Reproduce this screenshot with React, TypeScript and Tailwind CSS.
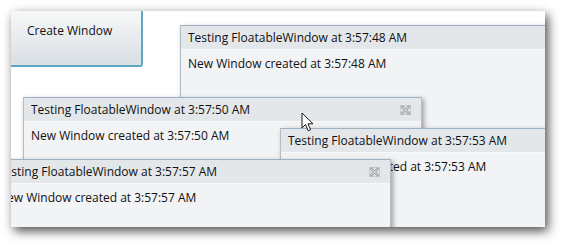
import React from "react";

const font = { fontFamily: '"Open Sans", "Noto Sans", sans-serif' };

function CloseIcon() {
  return (
    <svg width="11" height="10" viewBox="0 0 11 10" className="block">
      <rect x="0.5" y="0.5" width="10" height="9" fill="none" stroke="#c4c8cc" strokeWidth="1" />
      <path d="M2.5 2 L8.5 8 M8.5 2 L2.5 8" stroke="#9a9ea3" strokeWidth="2.6" strokeLinecap="square" />
      <path d="M2.5 2 L8.5 8 M8.5 2 L2.5 8" stroke="#eef0f2" strokeWidth="1" strokeLinecap="square" />
    </svg>
  );
}

function FWindow({
  time,
  className,
  close,
}: {
  time: string;
  className: string;
  close?: boolean;
}) {
  return (
    <div
      className={`absolute flex flex-col border border-[#b4bcc4] border-t-[#9fb2c4] bg-[#f2f3f5] shadow-[2px_2px_5px_rgba(0,0,0,0.35)] ${className}`}
    >
      <div className="flex h-[24px] shrink-0 items-center justify-between border-b border-b-[#f7f8f9] bg-[#e3e7ea] pl-[7px] pr-[10px]">
        <span className="whitespace-nowrap text-[12px] text-[#111]">
          Testing FloatableWindow at {time}
        </span>
        {close && <CloseIcon />}
      </div>
      <div className="whitespace-nowrap pl-[7px] pt-[6px] text-[12px] leading-[16px] text-[#111]">
        New Window created at {time}
      </div>
    </div>
  );
}

export default function App() {
  return (
    <div className="h-[247px] w-[565px] bg-white pl-[11px] pt-[11px]" style={font}>
      <div className="relative h-[216px] w-[534px] overflow-hidden bg-white shadow-[3px_4px_10px_rgba(0,0,0,0.7)]">
        <div className="absolute left-0 top-0 h-[56px] w-[132px] rounded-br-[3px] border-b-2 border-r-2 border-[#5aa8c4] bg-gradient-to-b from-[#f7f8f8] to-[#d9dfe4] pl-[16px] pt-[11px] text-[12px] text-[#111]">
          Create Window
        </div>
        <FWindow time="3:57:48 AM" className="left-[169px] top-[14px] h-[230px] w-[400px]" />
        <FWindow time="3:57:50 AM" className="left-[12px] top-[86px] h-[100px] w-[399px]" close />
        <FWindow time="3:57:53 AM" className="left-[269px] top-[117px] h-[130px] w-[400px]" />
        <FWindow time="3:57:57 AM" className="left-[-21px] top-[148px] h-[80px] w-[401px]" close />
        <svg
          className="absolute left-[290px] top-[101px]"
          width="14"
          height="21"
          viewBox="0 0 14 21"
        >
          <path
            d="M1 1 L1 16 L4.5 12.5 L7.2 18.8 L9.6 17.8 L7 11.8 L12 11.8 Z"
            fill="#ffffff"
            stroke="#1a1a1a"
            strokeWidth="1"
            strokeLinejoin="round"
          />
        </svg>
      </div>
    </div>
  );
}
